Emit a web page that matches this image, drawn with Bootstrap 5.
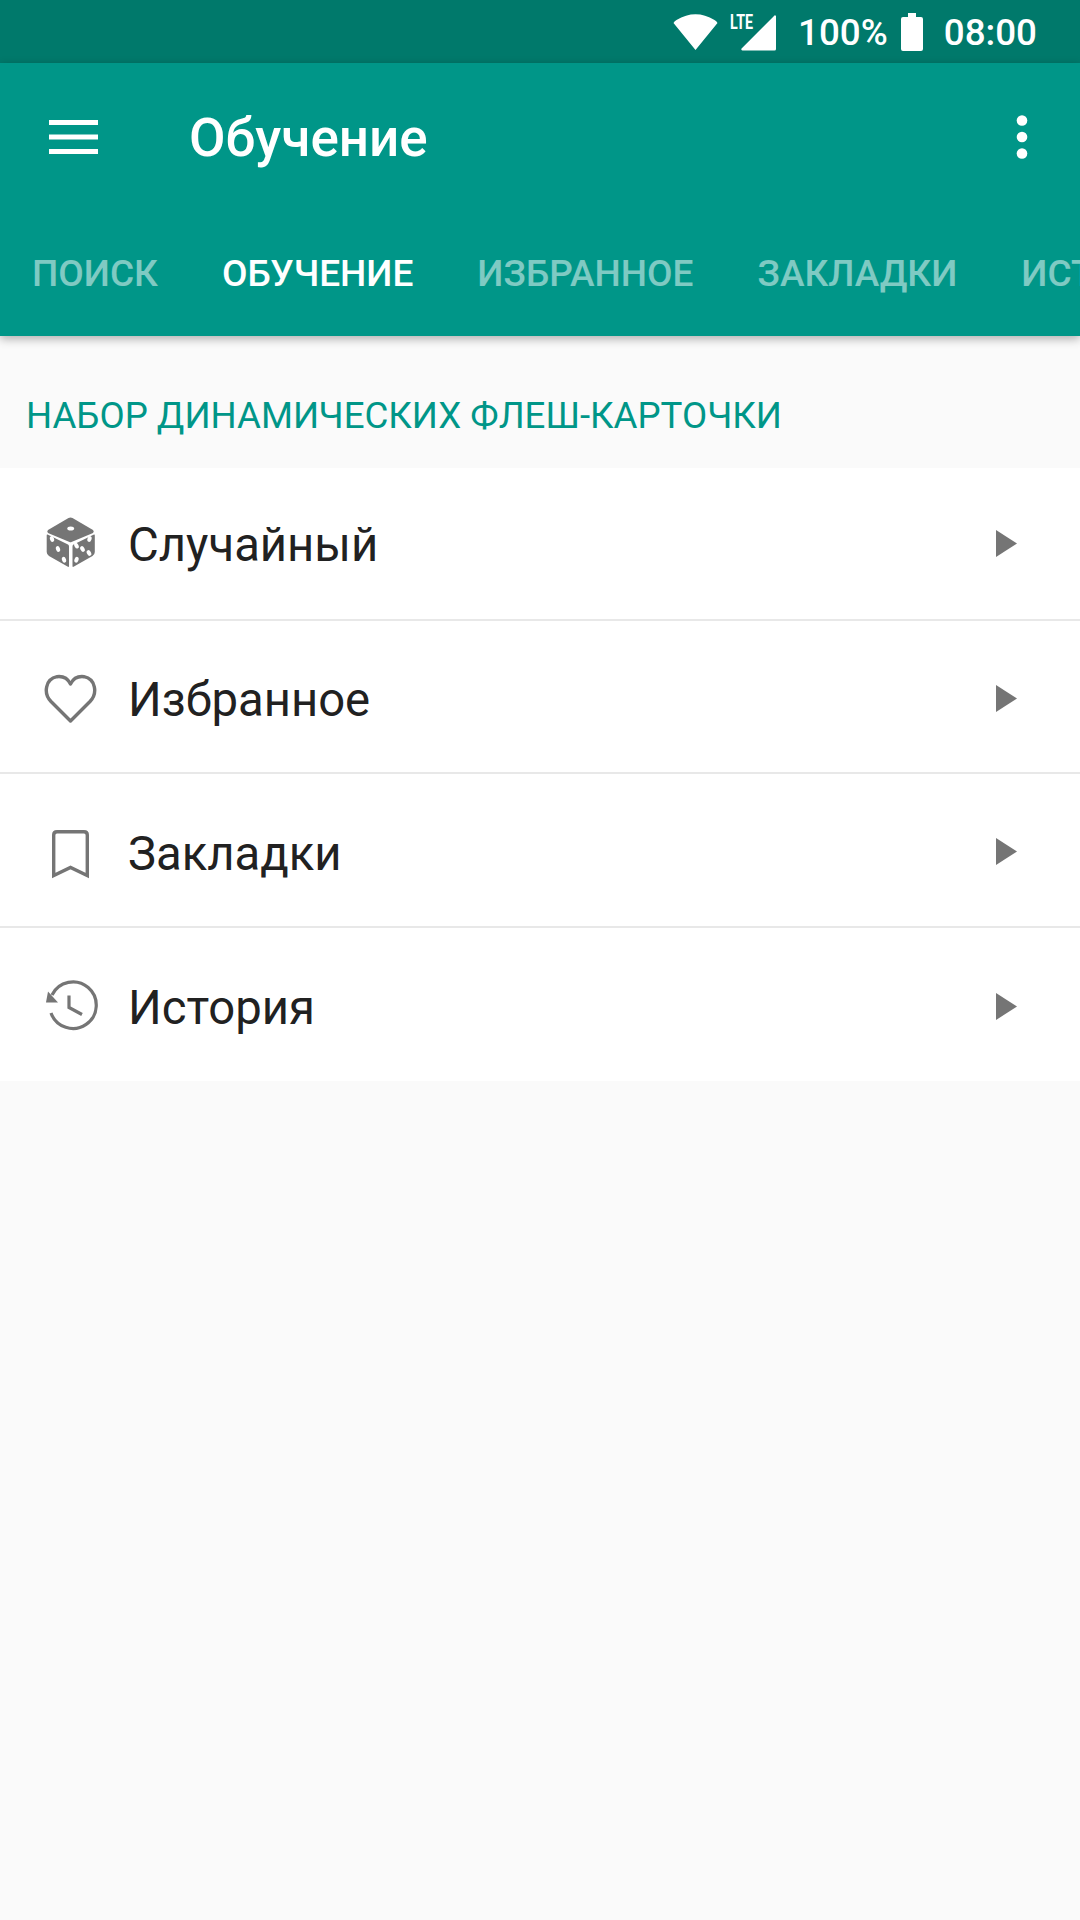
<!DOCTYPE html>
<html lang="ru">
<head>
<meta charset="utf-8">
<title>Обучение</title>
<link href="https://cdn.jsdelivr.net/npm/bootstrap@5.3.0/dist/css/bootstrap.min.css" rel="stylesheet">
<style>
html,body{width:1080px;height:1920px;overflow:hidden;background:#fafafa;font-family:Roboto,"Liberation Sans",sans-serif;}
.status-strip{height:63px;background:#00796b;color:#fff;font-size:36.75px;font-weight:500;line-height:63px;padding-right:43px;}
.status-strip svg{display:block;}
.status-strip span{padding-top:1px;}
.status-pct{margin-left:22px;}
.status-batt{margin-left:13px;margin-right:21px;}
.status-lte{margin-left:12px;}
.lte-label{font-size:21px;font-weight:700;fill:#fff;font-family:"Roboto",sans-serif;}
.appbar{background:#009688;height:273px;box-shadow:0 3px 9px rgba(0,0,0,.3);padding:0;display:block;position:relative;z-index:2;}
.appbar-top{height:147px;padding:0 52px 0 49px;}
.appbar-title{font-size:53px;font-weight:500;color:#fff;margin-left:91px;line-height:1;padding-top:3px;}
.tab-strip{height:126px;overflow:hidden;flex-wrap:nowrap;}
.tab-strip .nav-link{font-size:37px;font-weight:500;color:rgba(255,255,255,.5);padding:0 32px;white-space:nowrap;line-height:1;margin-top:1px;}
.tab-strip .nav-link.active{color:#fff;}
.sect-head{height:132px;color:#009688;font-size:36.65px;padding:28px 26px 0;line-height:1;}
.topic-list{--bs-list-group-border-radius:0;--bs-list-group-border-width:0;}
.topic-row{height:153.5px;padding:0 63px 0 44px;background:#fff;border-bottom:2px solid #e8e8e8!important;}
.topic-row + .topic-row{padding-top:4px;}
.topic-row:first-child{height:152.5px;}
.topic-row:last-child{height:153.5px;border-bottom:0!important;}
.topic-ico{width:54px;height:54px;flex:none;margin-right:30px;}
.topic-txt{font-size:47.25px;color:#212121;line-height:1;flex:1;padding-top:5px;}
.topic-arrow{flex:none;}
</style>
</head>
<body>
<div class="status-strip d-flex align-items-center justify-content-end">
  <svg width="45" height="36" viewBox="0 0 45 36"><path d="M22.5 36 L0.5 9 Q1.5 7 3.5 6 Q22.5 -5.5 41.5 6 Q43.5 7 44.5 9 Z" fill="#fff"/></svg>
  <svg class="status-lte" width="46" height="46" viewBox="0 -4 46 46"><path d="M46 3V36a1.5 1.5 0 0 1-1.5 1.5H12.5a1.2 1.2 0 0 1-.9-2L44 3a1.2 1.2 0 0 1 2 0Z" fill="#fff"/><text class="lte-label" x="0" y="16" textLength="23" lengthAdjust="spacingAndGlyphs">LTE</text></svg>
  <span class="status-pct">100%</span>
  <svg class="status-batt" width="22" height="38" viewBox="0 0 22 38"><path d="M7 0h8v4h5a2 2 0 0 1 2 2v30a2 2 0 0 1-2 2H2a2 2 0 0 1-2-2V6a2 2 0 0 1 2-2h5Z" fill="#fff"/></svg>
  <span>08:00</span>
</div>
<nav class="navbar appbar">
  <div class="appbar-top d-flex align-items-center">
    <svg width="49" height="34" viewBox="0 0 49 34"><g fill="#fff"><rect width="49" height="5" y="0"/><rect width="49" height="5" y="14.5"/><rect width="49" height="5" y="29"/></g></svg>
    <span class="appbar-title flex-grow-1">Обучение</span>
    <svg width="12" height="44" viewBox="0 0 12 44"><g fill="#fff"><circle cx="6" cy="5.5" r="5.3"/><circle cx="6" cy="22" r="5.3"/><circle cx="6" cy="38.5" r="5.3"/></g></svg>
  </div>
  <ul class="nav tab-strip align-items-center">
    <li class="nav-item"><a class="nav-link" href="#">ПОИСК</a></li>
    <li class="nav-item"><a class="nav-link active" href="#">ОБУЧЕНИЕ</a></li>
    <li class="nav-item"><a class="nav-link" href="#">ИЗБРАННОЕ</a></li>
    <li class="nav-item"><a class="nav-link" href="#">ЗАКЛАДКИ</a></li>
    <li class="nav-item"><a class="nav-link" href="#">ИСТОРИЯ</a></li>
  </ul>
</nav>
<div class="sect-head d-flex align-items-center">НАБОР ДИНАМИЧЕСКИХ ФЛЕШ-КАРТОЧКИ</div>
<div class="list-group topic-list">
  <div class="list-group-item topic-row d-flex align-items-center">
    <svg class="topic-ico" viewBox="0 0 54 54"><path d="M24.5 2 Q26.5 1 28.5 2 L49 14 Q50.5 15.5 49 17 L27.5 26 Q26.5 26.4 25.5 26 L4 17 Q2.5 15.5 4 14 Z" fill="#757575"/><ellipse cx="26.7" cy="12.5" rx="3.4" ry="2" fill="#fff"/><path d="M3.5 18.5 L24 28.5 Q25 29 25 30.5 V50 Q25 51.5 23.5 50.5 L5 40 Q2.7 38.5 2.7 36 V19.5 Q2.7 18 3.5 18.5 Z" fill="#757575"/><path d="M50 18.5 L29.5 28.5 Q28.5 29 28.5 30.5 V50 Q28.5 51.5 30 50.5 L48.5 40 Q50.8 38.5 50.8 36 V19.5 Q50.8 18 50 18.5 Z" fill="#757575"/><g fill="#fff"><ellipse cx="8" cy="23" rx="2" ry="3" transform="rotate(-20 8 23)"/><ellipse cx="14" cy="33" rx="2" ry="3" transform="rotate(-20 14 33)"/><ellipse cx="20" cy="43.7" rx="2" ry="3" transform="rotate(-20 20 43.7)"/><ellipse cx="45.5" cy="23" rx="2" ry="3" transform="rotate(20 45.5 23)"/><ellipse cx="32.5" cy="29.7" rx="2" ry="3" transform="rotate(-30 32.5 29.7)"/><ellipse cx="38.5" cy="33" rx="2" ry="3" transform="rotate(-30 38.5 33)"/><ellipse cx="45" cy="37" rx="2" ry="3" transform="rotate(-30 45 37)"/><ellipse cx="32.5" cy="43.7" rx="2" ry="3" transform="rotate(20 32.5 43.7)"/></g></svg>
    <span class="topic-txt">Случайный</span>
    <svg class="topic-arrow" width="21" height="27" viewBox="0 0 21 27"><path d="M0 0 L21 13.5 L0 27 Z" fill="#757575"/></svg>
  </div>
  <div class="list-group-item topic-row d-flex align-items-center">
    <svg class="topic-ico" viewBox="0 0 54 54"><path d="M26.5 50 L7 30.5 C-1 22 1.5 8 13 5.7 C19 5 24 8 26.5 13 C29 8 34 5 40 5.7 C51.5 8 54 22 46 30.5 Z" fill="none" stroke="#757575" stroke-width="3.4" stroke-linejoin="round"/></svg>
    <span class="topic-txt">Избранное</span>
    <svg class="topic-arrow" width="21" height="27" viewBox="0 0 21 27"><path d="M0 0 L21 13.5 L0 27 Z" fill="#757575"/></svg>
  </div>
  <div class="list-group-item topic-row d-flex align-items-center">
    <svg class="topic-ico" viewBox="0 0 54 54"><path d="M9.7 50.5 V10 Q9.7 6.7 13 6.7 H40 Q43.3 6.7 43.3 10 V50.5 L26.5 42.5 Z" fill="none" stroke="#757575" stroke-width="3.4" stroke-linejoin="miter"/></svg>
    <span class="topic-txt">Закладки</span>
    <svg class="topic-arrow" width="21" height="27" viewBox="0 0 21 27"><path d="M0 0 L21 13.5 L0 27 Z" fill="#757575"/></svg>
  </div>
  <div class="list-group-item topic-row d-flex align-items-center">
    <svg class="topic-ico" viewBox="0 0 54 54"><path d="M8 16 A23.3 23.3 0 1 1 7 34" fill="none" stroke="#757575" stroke-width="3.2"/><path d="M2 23.5 L4 12.5 L14 23.5 Z" fill="#757575"/><path d="M25 16.5 V28.5 L38 35.5" fill="none" stroke="#757575" stroke-width="3.2"/></svg>
    <span class="topic-txt">История</span>
    <svg class="topic-arrow" width="21" height="27" viewBox="0 0 21 27"><path d="M0 0 L21 13.5 L0 27 Z" fill="#757575"/></svg>
  </div>
</div>
<script src="https://cdn.jsdelivr.net/npm/bootstrap@5.3.0/dist/js/bootstrap.bundle.min.js"></script>
</body>
</html>
